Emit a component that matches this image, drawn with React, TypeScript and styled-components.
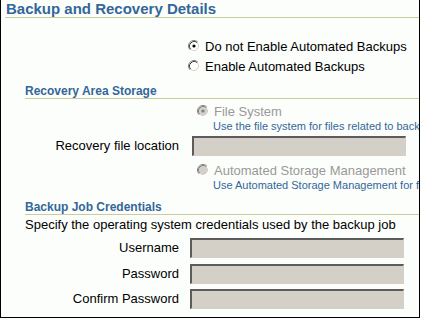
import React from 'react';
import styled, { createGlobalStyle } from 'styled-components';

const GlobalStyle = createGlobalStyle`
  html, body {
    margin: 0;
    padding: 0;
    background: #fcfefc;
  }
  body {
    font-family: "Liberation Sans", Arial, sans-serif;
    font-size: 13px;
    color: #000;
  }
`;

const Page = styled.div`
  box-sizing: border-box;
  width: 420px;
  height: 318px;
  border: 1px solid #000;
  border-top: none;
  overflow: hidden;
`;

const Title = styled.h1`
  margin: 0 0 0 4px;
  padding-left: 1px;
  font-size: 15px;
  line-height: 17px;
  font-weight: bold;
  color: #336699;
  border-bottom: 1px solid #cccc99;
`;

const SubHeader = styled.h2<{ $top: number }>`
  margin: ${(p) => p.$top}px 0 0 24px;
  font-size: 12px;
  line-height: 14px;
  font-weight: bold;
  color: #336699;
  border-bottom: 1px solid #cccc99;
`;

const RadioList = styled.div`
  margin-top: 19px;
  padding-left: 187px;
`;

const OptionRow = styled.label<{ $disabled?: boolean; $height?: number }>`
  display: flex;
  align-items: flex-start;
  gap: 5px;
  height: ${(p) => p.$height ?? 16}px;
  line-height: ${(p) => p.$height ?? 16}px;
  font-size: 13px;
  white-space: nowrap;
  color: ${(p) => (p.$disabled ? '#999999' : '#000')};

  svg {
    flex: none;
    margin-top: ${(p) => ((p.$height ?? 16) - 16) / 2 + 1}px;
  }
`;

const Option = styled.div<{ $indent?: number; $top?: number }>`
  margin-left: ${(p) => p.$indent ?? 0}px;
  margin-top: ${(p) => p.$top ?? 0}px;
`;

const Hint = styled.div`
  padding-left: 16px;
  font-size: 11px;
  line-height: 13px;
  color: #336699;
  white-space: nowrap;
`;

const FormGrid = styled.div<{ $gap: number; $top: number; $rowGap: number }>`
  display: grid;
  grid-template-columns: 178px 214px;
  column-gap: ${(p) => p.$gap}px;
  row-gap: ${(p) => p.$rowGap}px;
  align-items: center;
  margin-top: ${(p) => p.$top}px;
`;

const Label = styled.div`
  text-align: right;
  font-size: 13px;
  line-height: 20px;
  white-space: nowrap;
`;

const Field = styled.div`
  grid-column: 2;
  min-width: 0;
`;

const Input = styled.div`
  box-sizing: border-box;
  height: 20px;
  background: #d4d0c8;
  border-top: 2px solid #5c5c5c;
  border-left: 2px solid #5c5c5c;
  border-right: 1px solid #d4d0c8;
  border-bottom: 1px solid #d4d0c8;
`;

const Intro = styled.div`
  margin: 2px 0 0 24px;
  font-size: 13px;
  line-height: 16px;
  white-space: nowrap;
`;

const RadioIcon = ({ checked, disabled }: { checked?: boolean; disabled?: boolean }) => (
  <svg width="12" height="12" viewBox="0 0 12 12">
    <circle cx="6" cy="6" r="4.2" fill={disabled ? '#d4d0c8' : '#ffffff'} />
    <path d="M9.89 2.11 A5.5 5.5 0 0 0 2.11 9.89" fill="none" stroke="#808080" strokeWidth="1" />
    <path d="M2.11 9.89 A5.5 5.5 0 0 0 9.89 2.11" fill="none" stroke="#ffffff" strokeWidth="1" />
    <path d="M9.18 2.82 A4.5 4.5 0 0 0 2.82 9.18" fill="none" stroke={disabled ? '#808080' : '#404040'} strokeWidth="1" />
    <path d="M2.82 9.18 A4.5 4.5 0 0 0 9.18 2.82" fill="none" stroke="#d4d0c8" strokeWidth="1" />
    {checked && <circle cx="6" cy="6" r="1.6" fill={disabled ? '#808080' : '#000'} />}
  </svg>
);

const App = () => (
  <>
    <GlobalStyle />
    <Page>
      <Title>Backup and Recovery Details</Title>

      <RadioList>
        <OptionRow $height={20}>
          <RadioIcon checked />
          Do not Enable Automated Backups
        </OptionRow>
        <OptionRow $height={20}>
          <RadioIcon />
          Enable Automated Backups
        </OptionRow>
      </RadioList>

      <SubHeader $top={7}>Recovery Area Storage</SubHeader>
      <FormGrid $gap={13} $top={5} $rowGap={3}>
        <Field>
          <Option $indent={5}>
            <OptionRow $disabled>
              <RadioIcon checked disabled />
              File System
            </OptionRow>
            <Hint>Use the file system for files related to backup and recovery</Hint>
          </Option>
        </Field>
        <Label>Recovery file location</Label>
        <Field>
          <Input />
        </Field>
        <Field>
          <Option $indent={5} $top={4}>
            <OptionRow $disabled>
              <RadioIcon disabled />
              Automated Storage Management
            </OptionRow>
            <Hint>Use Automated Storage Management for files related to backup and recovery</Hint>
          </Option>
        </Field>
      </FormGrid>

      <SubHeader $top={8}>Backup Job Credentials</SubHeader>
      <Intro>Specify the operating system credentials used by the backup job</Intro>
      <FormGrid $gap={11} $top={5} $rowGap={5.5}>
        <Label>Username</Label>
        <Field>
          <Input />
        </Field>
        <Label>Password</Label>
        <Field>
          <Input />
        </Field>
        <Label>Confirm Password</Label>
        <Field>
          <Input />
        </Field>
      </FormGrid>
    </Page>
  </>
);

export default App;
